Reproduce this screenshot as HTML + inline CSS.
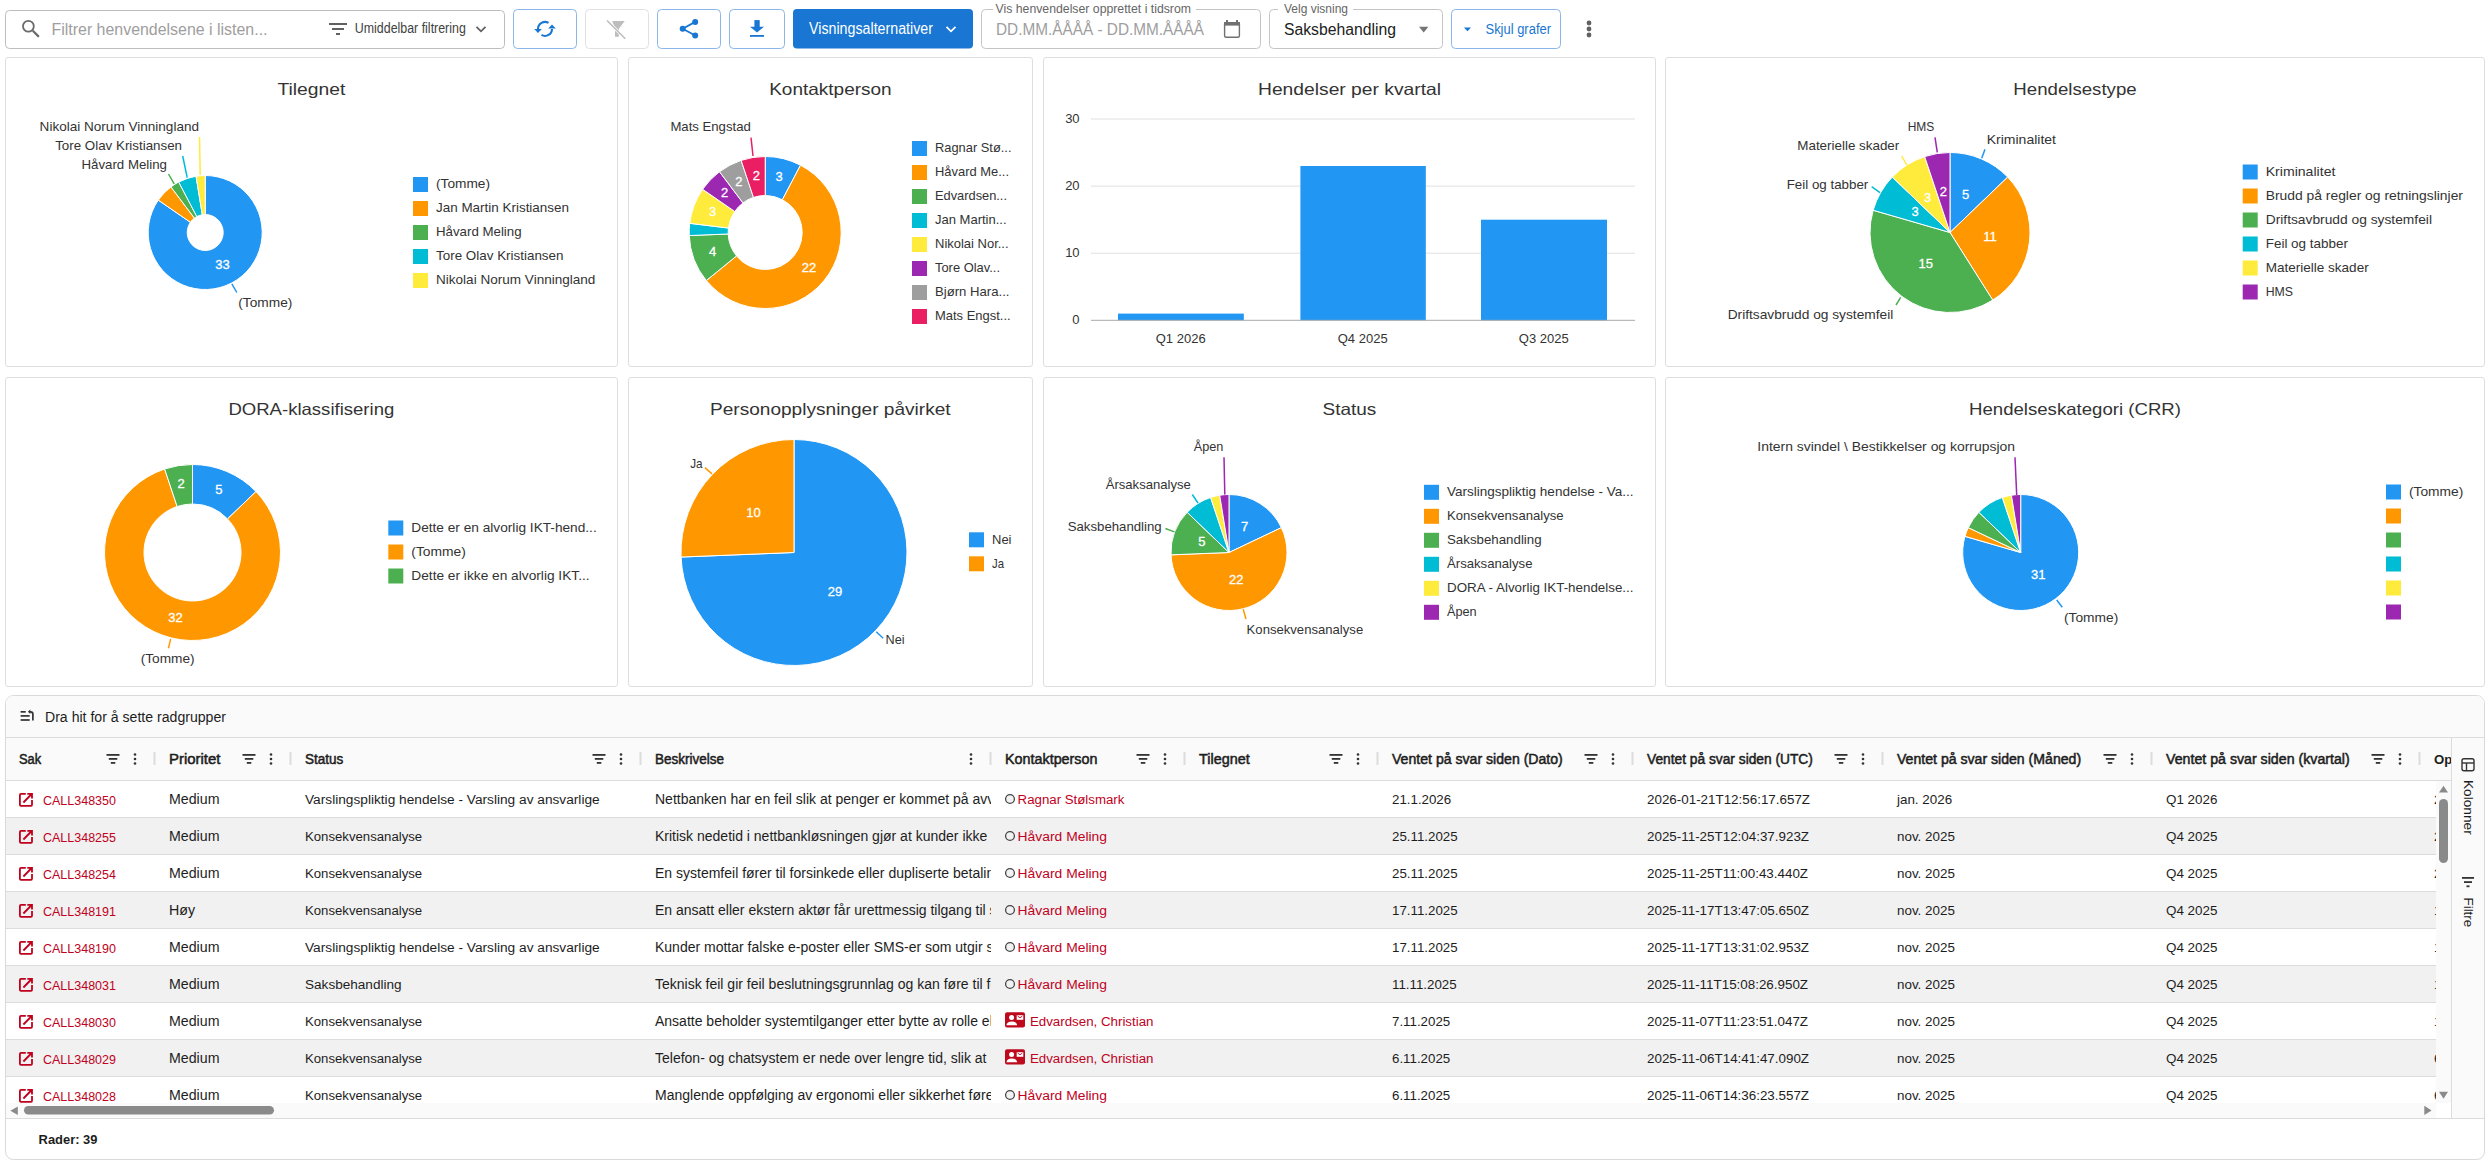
<!DOCTYPE html>
<html><head><meta charset="utf-8"><title>Henvendelser</title>
<style>
html,body{margin:0;padding:0;}
body{width:2490px;height:1166px;overflow:hidden;position:relative;background:#fff;font-family:"Liberation Sans",sans-serif;color:#1d1d1d;}
.pnl{position:absolute;border:1px solid #dedede;border-radius:3px;background:#fff;}
.ov{position:absolute;left:0;top:0;}
.a{position:absolute;white-space:nowrap;}
</style></head><body>
<div class="pnl" style="left:5px;top:57px;width:611px;height:308px"></div><div class="pnl" style="left:628px;top:57px;width:403px;height:308px"></div><div class="pnl" style="left:1043px;top:57px;width:611px;height:308px"></div><div class="pnl" style="left:1665px;top:57px;width:818px;height:308px"></div><div class="pnl" style="left:5px;top:377px;width:611px;height:308px"></div><div class="pnl" style="left:628px;top:377px;width:403px;height:308px"></div><div class="pnl" style="left:1043px;top:377px;width:611px;height:308px"></div><div class="pnl" style="left:1665px;top:377px;width:818px;height:308px"></div><svg class="ov" width="2490" height="1166" viewBox="0 0 2490 1166" font-family="Liberation Sans, sans-serif"><text x="277.4" y="95.3" font-size="16.5" fill="#333333" text-anchor="start" font-weight="normal" textLength="67.9" lengthAdjust="spacingAndGlyphs">Tilegnet</text><text x="769.2" y="95.3" font-size="16.5" fill="#333333" text-anchor="start" font-weight="normal" textLength="122.5" lengthAdjust="spacingAndGlyphs">Kontaktperson</text><text x="1258.0" y="95.3" font-size="16.5" fill="#333333" text-anchor="start" font-weight="normal" textLength="183.0" lengthAdjust="spacingAndGlyphs">Hendelser per kvartal</text><text x="2013.3" y="95.3" font-size="16.5" fill="#333333" text-anchor="start" font-weight="normal" textLength="123.4" lengthAdjust="spacingAndGlyphs">Hendelsestype</text><text x="228.4" y="415.3" font-size="16.5" fill="#333333" text-anchor="start" font-weight="normal" textLength="165.9" lengthAdjust="spacingAndGlyphs">DORA-klassifisering</text><text x="710.0" y="415.3" font-size="16.5" fill="#333333" text-anchor="start" font-weight="normal" textLength="240.6" lengthAdjust="spacingAndGlyphs">Personopplysninger påvirket</text><text x="1322.5" y="415.3" font-size="16.5" fill="#333333" text-anchor="start" font-weight="normal" textLength="53.8" lengthAdjust="spacingAndGlyphs">Status</text><text x="1969.0" y="415.3" font-size="16.5" fill="#333333" text-anchor="start" font-weight="normal" textLength="212.0" lengthAdjust="spacingAndGlyphs">Hendelseskategori (CRR)</text><path d="M205.20 175.50 A57.00 57.00 0 1 1 158.29 200.12 L190.39 222.27 A18.00 18.00 0 1 0 205.20 214.50 Z" fill="#2196f3" stroke="#fff" stroke-width="1" stroke-linejoin="round"/><path d="M158.29 200.12 A57.00 57.00 0 0 1 170.96 186.93 L194.39 218.11 A18.00 18.00 0 0 0 190.39 222.27 Z" fill="#ff9800" stroke="#fff" stroke-width="1" stroke-linejoin="round"/><path d="M170.96 186.93 A57.00 57.00 0 0 1 178.71 182.03 L196.83 216.56 A18.00 18.00 0 0 0 194.39 218.11 Z" fill="#4caf50" stroke="#fff" stroke-width="1" stroke-linejoin="round"/><path d="M178.71 182.03 A57.00 57.00 0 0 1 196.06 176.24 L202.31 214.73 A18.00 18.00 0 0 0 196.83 216.56 Z" fill="#00bcd4" stroke="#fff" stroke-width="1" stroke-linejoin="round"/><path d="M196.06 176.24 A57.00 57.00 0 0 1 205.20 175.50 L205.20 214.50 A18.00 18.00 0 0 0 202.31 214.73 Z" fill="#ffeb3b" stroke="#fff" stroke-width="1" stroke-linejoin="round"/><rect x="413.0" y="177.0" width="15" height="15" fill="#2196f3"/><text x="436.0" y="188.2" font-size="13.0" fill="#333333" text-anchor="start" font-weight="normal" textLength="54.0" lengthAdjust="spacingAndGlyphs">(Tomme)</text><rect x="413.0" y="201.0" width="15" height="15" fill="#ff9800"/><text x="436.0" y="212.2" font-size="13.0" fill="#333333" text-anchor="start" font-weight="normal" textLength="133.0" lengthAdjust="spacingAndGlyphs">Jan Martin Kristiansen</text><rect x="413.0" y="225.0" width="15" height="15" fill="#4caf50"/><text x="436.0" y="236.2" font-size="13.0" fill="#333333" text-anchor="start" font-weight="normal" textLength="85.6" lengthAdjust="spacingAndGlyphs">Håvard Meling</text><rect x="413.0" y="249.0" width="15" height="15" fill="#00bcd4"/><text x="436.0" y="260.2" font-size="13.0" fill="#333333" text-anchor="start" font-weight="normal" textLength="127.5" lengthAdjust="spacingAndGlyphs">Tore Olav Kristiansen</text><rect x="413.0" y="273.0" width="15" height="15" fill="#ffeb3b"/><text x="436.0" y="284.2" font-size="13.0" fill="#333333" text-anchor="start" font-weight="normal" textLength="159.4" lengthAdjust="spacingAndGlyphs">Nikolai Norum Vinningland</text><line x1="199.5" y1="137.0" x2="200.2" y2="175.0" stroke="#ffeb3b" stroke-width="1.5"/><line x1="182.7" y1="156.0" x2="187.2" y2="177.6" stroke="#00bcd4" stroke-width="1.5"/><line x1="168.5" y1="174.0" x2="174.2" y2="183.9" stroke="#4caf50" stroke-width="1.5"/><line x1="231.9" y1="283.9" x2="236.8" y2="292.5" stroke="#2196f3" stroke-width="1.5"/><text x="39.6" y="131.1" font-size="13.0" fill="#333333" text-anchor="start" font-weight="normal" textLength="159.4" lengthAdjust="spacingAndGlyphs">Nikolai Norum Vinningland</text><text x="55.2" y="150.4" font-size="13.0" fill="#333333" text-anchor="start" font-weight="normal" textLength="126.8" lengthAdjust="spacingAndGlyphs">Tore Olav Kristiansen</text><text x="81.5" y="169.3" font-size="13.0" fill="#333333" text-anchor="start" font-weight="normal" textLength="85.5" lengthAdjust="spacingAndGlyphs">Håvard Meling</text><text x="238.3" y="307.2" font-size="13.0" fill="#333333" text-anchor="start" font-weight="normal" textLength="54.1" lengthAdjust="spacingAndGlyphs">(Tomme)</text><text x="222.4" y="269.2" font-size="13.0" fill="#ffffff" text-anchor="middle" font-weight="normal" stroke="#ffffff" stroke-width="0.3">33</text><path d="M765.20 156.50 A76.00 76.00 0 0 1 800.52 165.21 L782.39 199.74 A37.00 37.00 0 0 0 765.20 195.50 Z" fill="#2196f3" stroke="#fff" stroke-width="1" stroke-linejoin="round"/><path d="M800.52 165.21 A76.00 76.00 0 1 1 706.33 280.57 L736.54 255.90 A37.00 37.00 0 1 0 782.39 199.74 Z" fill="#ff9800" stroke="#fff" stroke-width="1" stroke-linejoin="round"/><path d="M706.33 280.57 A76.00 76.00 0 0 1 689.26 235.56 L728.23 233.99 A37.00 37.00 0 0 0 736.54 255.90 Z" fill="#4caf50" stroke="#fff" stroke-width="1" stroke-linejoin="round"/><path d="M689.26 235.56 A76.00 76.00 0 0 1 689.75 223.34 L728.47 228.04 A37.00 37.00 0 0 0 728.23 233.99 Z" fill="#00bcd4" stroke="#fff" stroke-width="1" stroke-linejoin="round"/><path d="M689.75 223.34 A76.00 76.00 0 0 1 702.65 189.33 L734.75 211.48 A37.00 37.00 0 0 0 728.47 228.04 Z" fill="#ffeb3b" stroke="#fff" stroke-width="1" stroke-linejoin="round"/><path d="M702.65 189.33 A76.00 76.00 0 0 1 719.54 171.74 L742.97 202.92 A37.00 37.00 0 0 0 734.75 211.48 Z" fill="#9c27b0" stroke="#fff" stroke-width="1" stroke-linejoin="round"/><path d="M719.54 171.74 A76.00 76.00 0 0 1 741.13 160.41 L753.48 197.40 A37.00 37.00 0 0 0 742.97 202.92 Z" fill="#9e9e9e" stroke="#fff" stroke-width="1" stroke-linejoin="round"/><path d="M741.13 160.41 A76.00 76.00 0 0 1 765.20 156.50 L765.20 195.50 A37.00 37.00 0 0 0 753.48 197.40 Z" fill="#e91e63" stroke="#fff" stroke-width="1" stroke-linejoin="round"/><rect x="912.0" y="141.0" width="15" height="15" fill="#2196f3"/><text x="935.0" y="152.2" font-size="13.0" fill="#333333" text-anchor="start" font-weight="normal" textLength="76.5" lengthAdjust="spacingAndGlyphs">Ragnar Stø...</text><rect x="912.0" y="165.0" width="15" height="15" fill="#ff9800"/><text x="935.0" y="176.2" font-size="13.0" fill="#333333" text-anchor="start" font-weight="normal" textLength="74.0" lengthAdjust="spacingAndGlyphs">Håvard Me...</text><rect x="912.0" y="189.0" width="15" height="15" fill="#4caf50"/><text x="935.0" y="200.2" font-size="13.0" fill="#333333" text-anchor="start" font-weight="normal" textLength="72.0" lengthAdjust="spacingAndGlyphs">Edvardsen...</text><rect x="912.0" y="213.0" width="15" height="15" fill="#00bcd4"/><text x="935.0" y="224.2" font-size="13.0" fill="#333333" text-anchor="start" font-weight="normal" textLength="71.6" lengthAdjust="spacingAndGlyphs">Jan Martin...</text><rect x="912.0" y="237.0" width="15" height="15" fill="#ffeb3b"/><text x="935.0" y="248.2" font-size="13.0" fill="#333333" text-anchor="start" font-weight="normal" textLength="73.6" lengthAdjust="spacingAndGlyphs">Nikolai Nor...</text><rect x="912.0" y="261.0" width="15" height="15" fill="#9c27b0"/><text x="935.0" y="272.2" font-size="13.0" fill="#333333" text-anchor="start" font-weight="normal" textLength="65.0" lengthAdjust="spacingAndGlyphs">Tore Olav...</text><rect x="912.0" y="285.0" width="15" height="15" fill="#9e9e9e"/><text x="935.0" y="296.2" font-size="13.0" fill="#333333" text-anchor="start" font-weight="normal" textLength="74.5" lengthAdjust="spacingAndGlyphs">Bjørn Hara...</text><rect x="912.0" y="309.0" width="15" height="15" fill="#e91e63"/><text x="935.0" y="320.2" font-size="13.0" fill="#333333" text-anchor="start" font-weight="normal" textLength="75.6" lengthAdjust="spacingAndGlyphs">Mats Engst...</text><line x1="751.0" y1="137.7" x2="753.0" y2="156.0" stroke="#e91e63" stroke-width="1.5"/><text x="670.4" y="131.1" font-size="13.0" fill="#333333" text-anchor="start" font-weight="normal" textLength="80.4" lengthAdjust="spacingAndGlyphs">Mats Engstad</text><text x="779.0" y="181.2" font-size="13.0" fill="#ffffff" text-anchor="middle" font-weight="normal" stroke="#ffffff" stroke-width="0.3">3</text><text x="809.0" y="272.1" font-size="13.0" fill="#ffffff" text-anchor="middle" font-weight="normal" stroke="#ffffff" stroke-width="0.3">22</text><text x="712.5" y="256.2" font-size="13.0" fill="#ffffff" text-anchor="middle" font-weight="normal" stroke="#ffffff" stroke-width="0.3">4</text><text x="712.5" y="216.0" font-size="13.0" fill="#ffffff" text-anchor="middle" font-weight="normal" stroke="#ffffff" stroke-width="0.3">3</text><text x="724.7" y="197.1" font-size="13.0" fill="#ffffff" text-anchor="middle" font-weight="normal" stroke="#ffffff" stroke-width="0.3">2</text><text x="738.9" y="185.7" font-size="13.0" fill="#ffffff" text-anchor="middle" font-weight="normal" stroke="#ffffff" stroke-width="0.3">2</text><text x="756.4" y="180.1" font-size="13.0" fill="#ffffff" text-anchor="middle" font-weight="normal" stroke="#ffffff" stroke-width="0.3">2</text><rect x="1091" y="118.5" width="544" height="1" fill="#e0e0e0"/><text x="1079.6" y="122.6" font-size="13.0" fill="#333333" text-anchor="end" font-weight="normal">30</text><rect x="1091" y="185.6" width="544" height="1" fill="#e0e0e0"/><text x="1079.6" y="189.7" font-size="13.0" fill="#333333" text-anchor="end" font-weight="normal">20</text><rect x="1091" y="252.7" width="544" height="1" fill="#e0e0e0"/><text x="1079.6" y="256.8" font-size="13.0" fill="#333333" text-anchor="end" font-weight="normal">10</text><text x="1079.6" y="323.9" font-size="13.0" fill="#333333" text-anchor="end" font-weight="normal">0</text><rect x="1118.0" y="313.6" width="125.8" height="6.7" fill="#2196f3"/><rect x="1300.4" y="166.0" width="125.4" height="154.3" fill="#2196f3"/><rect x="1481.0" y="219.7" width="126.0" height="100.7" fill="#2196f3"/><rect x="1091" y="319.8" width="544" height="1" fill="#aaaaaa"/><text x="1180.7" y="343.0" font-size="13.0" fill="#333333" text-anchor="middle" font-weight="normal">Q1 2026</text><text x="1362.7" y="343.0" font-size="13.0" fill="#333333" text-anchor="middle" font-weight="normal">Q4 2025</text><text x="1543.8" y="343.0" font-size="13.0" fill="#333333" text-anchor="middle" font-weight="normal">Q3 2025</text><path d="M1950.00 232.50 L1950.00 152.50 A80.00 80.00 0 0 1 2007.70 177.08 Z" fill="#2196f3" stroke="#fff" stroke-width="1" stroke-linejoin="round"/><path d="M1950.00 232.50 L2007.70 177.08 A80.00 80.00 0 0 1 1992.76 300.12 Z" fill="#ff9800" stroke="#fff" stroke-width="1" stroke-linejoin="round"/><path d="M1950.00 232.50 L1992.76 300.12 A80.00 80.00 0 0 1 1873.16 210.24 Z" fill="#4caf50" stroke="#fff" stroke-width="1" stroke-linejoin="round"/><path d="M1950.00 232.50 L1873.16 210.24 A80.00 80.00 0 0 1 1892.30 177.08 Z" fill="#00bcd4" stroke="#fff" stroke-width="1" stroke-linejoin="round"/><path d="M1950.00 232.50 L1892.30 177.08 A80.00 80.00 0 0 1 1924.67 156.62 Z" fill="#ffeb3b" stroke="#fff" stroke-width="1" stroke-linejoin="round"/><path d="M1950.00 232.50 L1924.67 156.62 A80.00 80.00 0 0 1 1950.00 152.50 Z" fill="#9c27b0" stroke="#fff" stroke-width="1" stroke-linejoin="round"/><rect x="2242.7" y="164.5" width="15" height="15" fill="#2196f3"/><text x="2265.7" y="175.7" font-size="13.0" fill="#333333" text-anchor="start" font-weight="normal" textLength="69.7" lengthAdjust="spacingAndGlyphs">Kriminalitet</text><rect x="2242.7" y="188.5" width="15" height="15" fill="#ff9800"/><text x="2265.7" y="199.7" font-size="13.0" fill="#333333" text-anchor="start" font-weight="normal" textLength="197.3" lengthAdjust="spacingAndGlyphs">Brudd på regler og retningslinjer</text><rect x="2242.7" y="212.5" width="15" height="15" fill="#4caf50"/><text x="2265.7" y="223.7" font-size="13.0" fill="#333333" text-anchor="start" font-weight="normal" textLength="166.3" lengthAdjust="spacingAndGlyphs">Driftsavbrudd og systemfeil</text><rect x="2242.7" y="236.5" width="15" height="15" fill="#00bcd4"/><text x="2265.7" y="247.7" font-size="13.0" fill="#333333" text-anchor="start" font-weight="normal" textLength="82.3" lengthAdjust="spacingAndGlyphs">Feil og tabber</text><rect x="2242.7" y="260.5" width="15" height="15" fill="#ffeb3b"/><text x="2265.7" y="271.7" font-size="13.0" fill="#333333" text-anchor="start" font-weight="normal" textLength="103.0" lengthAdjust="spacingAndGlyphs">Materielle skader</text><rect x="2242.7" y="284.5" width="15" height="15" fill="#9c27b0"/><text x="2265.7" y="295.7" font-size="13.0" fill="#333333" text-anchor="start" font-weight="normal" textLength="27.3" lengthAdjust="spacingAndGlyphs">HMS</text><line x1="1935.0" y1="137.3" x2="1937.3" y2="152.3" stroke="#9c27b0" stroke-width="1.5"/><line x1="1985.0" y1="149.3" x2="1981.7" y2="158.3" stroke="#2196f3" stroke-width="1.5"/><line x1="1901.7" y1="156.0" x2="1906.7" y2="165.0" stroke="#ffeb3b" stroke-width="1.5"/><line x1="1871.7" y1="186.7" x2="1880.0" y2="192.7" stroke="#00bcd4" stroke-width="1.5"/><line x1="1900.7" y1="297.3" x2="1896.0" y2="305.0" stroke="#4caf50" stroke-width="1.5"/><text x="1907.7" y="131.4" font-size="13.0" fill="#333333" text-anchor="start" font-weight="normal" textLength="26.6" lengthAdjust="spacingAndGlyphs">HMS</text><text x="1986.7" y="144.0" font-size="13.0" fill="#333333" text-anchor="start" font-weight="normal" textLength="69.3" lengthAdjust="spacingAndGlyphs">Kriminalitet</text><text x="1797.3" y="150.4" font-size="13.0" fill="#333333" text-anchor="start" font-weight="normal" textLength="102.0" lengthAdjust="spacingAndGlyphs">Materielle skader</text><text x="1786.7" y="189.0" font-size="13.0" fill="#333333" text-anchor="start" font-weight="normal" textLength="81.6" lengthAdjust="spacingAndGlyphs">Feil og tabber</text><text x="1727.7" y="319.0" font-size="13.0" fill="#333333" text-anchor="start" font-weight="normal" textLength="165.6" lengthAdjust="spacingAndGlyphs">Driftsavbrudd og systemfeil</text><text x="1965.7" y="199.0" font-size="13.0" fill="#ffffff" text-anchor="middle" font-weight="normal" stroke="#ffffff" stroke-width="0.3">5</text><text x="1990.0" y="241.4" font-size="13.0" fill="#ffffff" text-anchor="middle" font-weight="normal" stroke="#ffffff" stroke-width="0.3">11</text><text x="1925.7" y="268.0" font-size="13.0" fill="#ffffff" text-anchor="middle" font-weight="normal" stroke="#ffffff" stroke-width="0.3">15</text><text x="1915.0" y="216.4" font-size="13.0" fill="#ffffff" text-anchor="middle" font-weight="normal" stroke="#ffffff" stroke-width="0.3">3</text><text x="1927.7" y="202.0" font-size="13.0" fill="#ffffff" text-anchor="middle" font-weight="normal" stroke="#ffffff" stroke-width="0.3">3</text><text x="1943.3" y="196.4" font-size="13.0" fill="#ffffff" text-anchor="middle" font-weight="normal" stroke="#ffffff" stroke-width="0.3">2</text><path d="M192.50 464.50 A88.00 88.00 0 0 1 255.97 491.54 L227.48 518.90 A48.50 48.50 0 0 0 192.50 504.00 Z" fill="#2196f3" stroke="#fff" stroke-width="1" stroke-linejoin="round"/><path d="M255.97 491.54 A88.00 88.00 0 1 1 164.63 469.03 L177.14 506.50 A48.50 48.50 0 1 0 227.48 518.90 Z" fill="#ff9800" stroke="#fff" stroke-width="1" stroke-linejoin="round"/><path d="M164.63 469.03 A88.00 88.00 0 0 1 192.50 464.50 L192.50 504.00 A48.50 48.50 0 0 0 177.14 506.50 Z" fill="#4caf50" stroke="#fff" stroke-width="1" stroke-linejoin="round"/><rect x="388.3" y="520.5" width="15" height="15" fill="#2196f3"/><text x="411.3" y="531.7" font-size="13.0" fill="#333333" text-anchor="start" font-weight="normal" textLength="185.4" lengthAdjust="spacingAndGlyphs">Dette er en alvorlig IKT-hend...</text><rect x="388.3" y="544.5" width="15" height="15" fill="#ff9800"/><text x="411.3" y="555.7" font-size="13.0" fill="#333333" text-anchor="start" font-weight="normal" textLength="54.6" lengthAdjust="spacingAndGlyphs">(Tomme)</text><rect x="388.3" y="568.5" width="15" height="15" fill="#4caf50"/><text x="411.3" y="579.7" font-size="13.0" fill="#333333" text-anchor="start" font-weight="normal" textLength="178.3" lengthAdjust="spacingAndGlyphs">Dette er ikke en alvorlig IKT...</text><line x1="170.7" y1="638.9" x2="168.4" y2="648.2" stroke="#ff9800" stroke-width="1.5"/><text x="140.7" y="663.4" font-size="13.0" fill="#333333" text-anchor="start" font-weight="normal" textLength="54.0" lengthAdjust="spacingAndGlyphs">(Tomme)</text><text x="218.8" y="493.6" font-size="13.0" fill="#ffffff" text-anchor="middle" font-weight="normal" stroke="#ffffff" stroke-width="0.3">5</text><text x="181.1" y="487.9" font-size="13.0" fill="#ffffff" text-anchor="middle" font-weight="normal" stroke="#ffffff" stroke-width="0.3">2</text><text x="175.5" y="622.4" font-size="13.0" fill="#ffffff" text-anchor="middle" font-weight="normal" stroke="#ffffff" stroke-width="0.3">32</text><path d="M794.00 552.50 L794.00 439.50 A113.00 113.00 0 1 1 681.09 557.05 Z" fill="#2196f3" stroke="#fff" stroke-width="1" stroke-linejoin="round"/><path d="M794.00 552.50 L681.09 557.05 A113.00 113.00 0 0 1 794.00 439.50 Z" fill="#ff9800" stroke="#fff" stroke-width="1" stroke-linejoin="round"/><rect x="969.0" y="532.3" width="15" height="15" fill="#2196f3"/><text x="992.0" y="543.5" font-size="13.0" fill="#333333" text-anchor="start" font-weight="normal" textLength="19.5" lengthAdjust="spacingAndGlyphs">Nei</text><rect x="969.0" y="556.3" width="15" height="15" fill="#ff9800"/><text x="992.0" y="567.5" font-size="13.0" fill="#333333" text-anchor="start" font-weight="normal" textLength="12.0" lengthAdjust="spacingAndGlyphs">Ja</text><line x1="704.9" y1="467.6" x2="712.0" y2="473.9" stroke="#ff9800" stroke-width="1.5"/><line x1="876.2" y1="631.8" x2="883.2" y2="638.3" stroke="#2196f3" stroke-width="1.5"/><text x="690.2" y="468.1" font-size="13.0" fill="#333333" text-anchor="start" font-weight="normal" textLength="12.4" lengthAdjust="spacingAndGlyphs">Ja</text><text x="885.5" y="644.4" font-size="13.0" fill="#333333" text-anchor="start" font-weight="normal" textLength="19.0" lengthAdjust="spacingAndGlyphs">Nei</text><text x="753.6" y="517.1" font-size="13.0" fill="#ffffff" text-anchor="middle" font-weight="normal" stroke="#ffffff" stroke-width="0.3">10</text><text x="835.1" y="595.5" font-size="13.0" fill="#ffffff" text-anchor="middle" font-weight="normal" stroke="#ffffff" stroke-width="0.3">29</text><path d="M1229.00 552.50 L1229.00 494.50 A58.00 58.00 0 0 1 1281.40 527.64 Z" fill="#2196f3" stroke="#fff" stroke-width="1" stroke-linejoin="round"/><path d="M1229.00 552.50 L1281.40 527.64 A58.00 58.00 0 1 1 1171.05 554.84 Z" fill="#ff9800" stroke="#fff" stroke-width="1" stroke-linejoin="round"/><path d="M1229.00 552.50 L1171.05 554.84 A58.00 58.00 0 0 1 1187.17 512.32 Z" fill="#4caf50" stroke="#fff" stroke-width="1" stroke-linejoin="round"/><path d="M1229.00 552.50 L1187.17 512.32 A58.00 58.00 0 0 1 1210.63 497.48 Z" fill="#00bcd4" stroke="#fff" stroke-width="1" stroke-linejoin="round"/><path d="M1229.00 552.50 L1210.63 497.48 A58.00 58.00 0 0 1 1219.70 495.25 Z" fill="#ffeb3b" stroke="#fff" stroke-width="1" stroke-linejoin="round"/><path d="M1229.00 552.50 L1219.70 495.25 A58.00 58.00 0 0 1 1229.00 494.50 Z" fill="#9c27b0" stroke="#fff" stroke-width="1" stroke-linejoin="round"/><rect x="1424.0" y="484.8" width="15" height="15" fill="#2196f3"/><text x="1447.0" y="496.0" font-size="13.0" fill="#333333" text-anchor="start" font-weight="normal" textLength="186.5" lengthAdjust="spacingAndGlyphs">Varslingspliktig hendelse - Va...</text><rect x="1424.0" y="508.8" width="15" height="15" fill="#ff9800"/><text x="1447.0" y="520.0" font-size="13.0" fill="#333333" text-anchor="start" font-weight="normal" textLength="116.6" lengthAdjust="spacingAndGlyphs">Konsekvensanalyse</text><rect x="1424.0" y="532.8" width="15" height="15" fill="#4caf50"/><text x="1447.0" y="544.0" font-size="13.0" fill="#333333" text-anchor="start" font-weight="normal" textLength="94.6" lengthAdjust="spacingAndGlyphs">Saksbehandling</text><rect x="1424.0" y="556.8" width="15" height="15" fill="#00bcd4"/><text x="1447.0" y="568.0" font-size="13.0" fill="#333333" text-anchor="start" font-weight="normal" textLength="85.5" lengthAdjust="spacingAndGlyphs">Årsaksanalyse</text><rect x="1424.0" y="580.8" width="15" height="15" fill="#ffeb3b"/><text x="1447.0" y="592.0" font-size="13.0" fill="#333333" text-anchor="start" font-weight="normal" textLength="186.5" lengthAdjust="spacingAndGlyphs">DORA - Alvorlig IKT-hendelse...</text><rect x="1424.0" y="604.8" width="15" height="15" fill="#9c27b0"/><text x="1447.0" y="616.0" font-size="13.0" fill="#333333" text-anchor="start" font-weight="normal" textLength="29.7" lengthAdjust="spacingAndGlyphs">Åpen</text><line x1="1224.0" y1="457.2" x2="1224.8" y2="494.5" stroke="#9c27b0" stroke-width="1.5"/><line x1="1192.3" y1="494.5" x2="1198.0" y2="503.0" stroke="#00bcd4" stroke-width="1.5"/><line x1="1165.4" y1="528.5" x2="1174.4" y2="531.9" stroke="#4caf50" stroke-width="1.5"/><line x1="1243.2" y1="609.2" x2="1246.0" y2="619.0" stroke="#ff9800" stroke-width="1.5"/><text x="1193.7" y="451.1" font-size="13.0" fill="#333333" text-anchor="start" font-weight="normal" textLength="29.7" lengthAdjust="spacingAndGlyphs">Åpen</text><text x="1105.7" y="489.3" font-size="13.0" fill="#333333" text-anchor="start" font-weight="normal" textLength="85.2" lengthAdjust="spacingAndGlyphs">Årsaksanalyse</text><text x="1067.7" y="531.2" font-size="13.0" fill="#333333" text-anchor="start" font-weight="normal" textLength="94.0" lengthAdjust="spacingAndGlyphs">Saksbehandling</text><text x="1246.6" y="634.3" font-size="13.0" fill="#333333" text-anchor="start" font-weight="normal" textLength="116.6" lengthAdjust="spacingAndGlyphs">Konsekvensanalyse</text><text x="1244.6" y="531.2" font-size="13.0" fill="#ffffff" text-anchor="middle" font-weight="normal" stroke="#ffffff" stroke-width="0.3">7</text><text x="1201.9" y="545.9" font-size="13.0" fill="#ffffff" text-anchor="middle" font-weight="normal" stroke="#ffffff" stroke-width="0.3">5</text><text x="1236.2" y="584.2" font-size="13.0" fill="#ffffff" text-anchor="middle" font-weight="normal" stroke="#ffffff" stroke-width="0.3">22</text><path d="M2020.70 552.50 L2020.70 494.50 A58.00 58.00 0 1 1 1964.99 536.36 Z" fill="#2196f3" stroke="#fff" stroke-width="1" stroke-linejoin="round"/><path d="M2020.70 552.50 L1964.99 536.36 A58.00 58.00 0 0 1 1968.30 527.64 Z" fill="#ff9800" stroke="#fff" stroke-width="1" stroke-linejoin="round"/><path d="M2020.70 552.50 L1968.30 527.64 A58.00 58.00 0 0 1 1978.87 512.32 Z" fill="#4caf50" stroke="#fff" stroke-width="1" stroke-linejoin="round"/><path d="M2020.70 552.50 L1978.87 512.32 A58.00 58.00 0 0 1 2002.33 497.48 Z" fill="#00bcd4" stroke="#fff" stroke-width="1" stroke-linejoin="round"/><path d="M2020.70 552.50 L2002.33 497.48 A58.00 58.00 0 0 1 2011.40 495.25 Z" fill="#ffeb3b" stroke="#fff" stroke-width="1" stroke-linejoin="round"/><path d="M2020.70 552.50 L2011.40 495.25 A58.00 58.00 0 0 1 2020.70 494.50 Z" fill="#9c27b0" stroke="#fff" stroke-width="1" stroke-linejoin="round"/><rect x="2386.0" y="484.5" width="15" height="15" fill="#2196f3"/><text x="2409.0" y="495.7" font-size="13.0" fill="#333333" text-anchor="start" font-weight="normal" textLength="54.3" lengthAdjust="spacingAndGlyphs">(Tomme)</text><rect x="2386.0" y="508.5" width="15" height="15" fill="#ff9800"/><rect x="2386.0" y="532.5" width="15" height="15" fill="#4caf50"/><rect x="2386.0" y="556.5" width="15" height="15" fill="#00bcd4"/><rect x="2386.0" y="580.5" width="15" height="15" fill="#ffeb3b"/><rect x="2386.0" y="604.5" width="15" height="15" fill="#9c27b0"/><line x1="2015.0" y1="457.3" x2="2016.7" y2="495.0" stroke="#9c27b0" stroke-width="1.5"/><line x1="2056.7" y1="600.0" x2="2062.3" y2="607.3" stroke="#2196f3" stroke-width="1.5"/><text x="1757.3" y="451.4" font-size="13.0" fill="#333333" text-anchor="start" font-weight="normal" textLength="257.7" lengthAdjust="spacingAndGlyphs">Intern svindel \ Bestikkelser og korrupsjon</text><text x="2064.0" y="622.0" font-size="13.0" fill="#333333" text-anchor="start" font-weight="normal" textLength="54.3" lengthAdjust="spacingAndGlyphs">(Tomme)</text><text x="2038.3" y="579.0" font-size="13.0" fill="#ffffff" text-anchor="middle" font-weight="normal" stroke="#ffffff" stroke-width="0.3">31</text></svg><svg class="ov" width="2490" height="60" viewBox="0 0 2490 60" font-family="Liberation Sans, sans-serif">
<!-- search box -->
<rect x="5.5" y="10.5" width="499" height="38" rx="4" fill="#fff" stroke="#bdbdbd" stroke-width="1"/>
<circle cx="28.4" cy="26.3" r="5.4" fill="none" stroke="#6b6b6b" stroke-width="1.8"/>
<line x1="33.3" y1="31.3" x2="38.2" y2="36.1" stroke="#6b6b6b" stroke-width="2.3" stroke-linecap="round"/>
<text x="51.5" y="35" font-size="16" fill="#9e9e9e" textLength="216" lengthAdjust="spacingAndGlyphs">Filtrer henvendelsene i listen...</text>
<rect x="329" y="23" width="18" height="2" fill="#616161"/><rect x="332" y="28" width="12" height="2" fill="#616161"/><rect x="336" y="33" width="4" height="2" fill="#616161"/>
<text x="354.8" y="33" font-size="14" fill="#424242" textLength="111" lengthAdjust="spacingAndGlyphs">Umiddelbar filtrering</text>
<path d="M476.5 26.8 L481 31.3 L485.5 26.8" fill="none" stroke="#616161" stroke-width="1.8"/>
<!-- refresh -->
<rect x="513.5" y="9.5" width="63" height="39" rx="4" fill="#fff" stroke="#8ab6ea" stroke-width="1"/>
<path d="M548.5 22.84 A7 7 0 0 0 538 28.9" fill="none" stroke="#1976d2" stroke-width="2.1"/>
<path d="M534.2 29 L541.8 29 L538 33 Z" fill="#1976d2"/>
<path d="M541.5 34.96 A7 7 0 0 0 552 28.9" fill="none" stroke="#1976d2" stroke-width="2.1"/>
<path d="M548.2 28.6 L555.8 28.6 L552 24.6 Z" fill="#1976d2"/>
<!-- filter off (disabled) -->
<rect x="585.5" y="9.5" width="63" height="39" rx="4" fill="#fff" stroke="#e0e0e0" stroke-width="1"/>
<path d="M612.2 21 L624.7 21 L619 28.4 L618.8 36.7 L615 36.7 L615 28.4 Z" fill="#bdbdbd"/>
<line x1="607" y1="20.5" x2="625.3" y2="38.8" stroke="#fff" stroke-width="3"/>
<line x1="607" y1="20.5" x2="625.3" y2="38.8" stroke="#bdbdbd" stroke-width="1.6"/>
<!-- share -->
<rect x="657.5" y="9.5" width="63" height="39" rx="4" fill="#fff" stroke="#8ab6ea" stroke-width="1"/>
<line x1="695.2" y1="21.9" x2="682.7" y2="28.8" stroke="#1976d2" stroke-width="1.8"/>
<line x1="695.2" y1="35.5" x2="682.7" y2="28.8" stroke="#1976d2" stroke-width="1.8"/>
<circle cx="695.2" cy="21.9" r="3" fill="#1976d2"/><circle cx="682.7" cy="28.8" r="3" fill="#1976d2"/><circle cx="695.2" cy="35.5" r="3" fill="#1976d2"/>
<!-- download -->
<rect x="729.5" y="9.5" width="55" height="39" rx="4" fill="#fff" stroke="#8ab6ea" stroke-width="1"/>
<rect x="754.4" y="20.1" width="5.3" height="7" fill="#1976d2"/>
<path d="M750 26.7 L764 26.7 L757 32.4 Z" fill="#1976d2"/>
<rect x="750" y="35" width="14" height="1.8" fill="#1976d2"/>
<!-- visningsalternativer -->
<rect x="793" y="9" width="180" height="39.5" rx="4" fill="#1976d2"/>
<text x="809" y="34" font-size="16" fill="#fff" textLength="124" lengthAdjust="spacingAndGlyphs">Visningsalternativer</text>
<path d="M946.5 26.8 L951 31.3 L955.5 26.8" fill="none" stroke="#fff" stroke-width="1.8"/>
<!-- date field -->
<rect x="981.5" y="9.5" width="279" height="39" rx="4" fill="#fff" stroke="#c4c4c4" stroke-width="1"/>
<rect x="993" y="5" width="203" height="8" fill="#fff"/>
<text x="995.5" y="13.2" font-size="13" fill="#666" textLength="195.5" lengthAdjust="spacingAndGlyphs">Vis henvendelser opprettet i tidsrom</text>
<text x="996" y="35" font-size="16" fill="#9e9e9e" textLength="208" lengthAdjust="spacingAndGlyphs">DD.MM.ÅÅÅÅ - DD.MM.ÅÅÅÅ</text>
<rect x="1224.6" y="22.6" width="14.8" height="14.6" rx="1.5" fill="none" stroke="#707070" stroke-width="1.4"/>
<rect x="1224" y="22" width="16" height="3.6" fill="#707070"/>
<rect x="1226" y="20" width="2" height="3" fill="#707070"/><rect x="1236" y="20" width="2" height="3" fill="#707070"/>
<!-- velg visning -->
<rect x="1269.5" y="9.5" width="173" height="39" rx="4" fill="#fff" stroke="#c4c4c4" stroke-width="1"/>
<rect x="1278" y="5" width="75" height="8" fill="#fff"/>
<text x="1284" y="13.3" font-size="13" fill="#666" textLength="64" lengthAdjust="spacingAndGlyphs">Velg visning</text>
<text x="1284" y="35" font-size="16" fill="#212121" textLength="112" lengthAdjust="spacingAndGlyphs">Saksbehandling</text>
<path d="M1419 26.7 L1428.4 26.7 L1423.7 32.5 Z" fill="#757575"/>
<!-- skjul grafer -->
<rect x="1451.5" y="9.5" width="109" height="39" rx="4" fill="#fff" stroke="#8ab6ea" stroke-width="1"/>
<path d="M1464 27.5 L1471 27.5 L1467.5 31.2 Z" fill="#1976d2"/>
<text x="1485.5" y="33.5" font-size="14" fill="#1976d2" textLength="65.5" lengthAdjust="spacingAndGlyphs">Skjul grafer</text>
<!-- kebab -->
<circle cx="1589" cy="23" r="2.4" fill="#616161"/><circle cx="1589" cy="29" r="2.4" fill="#616161"/><circle cx="1589" cy="35" r="2.4" fill="#616161"/>
</svg>
<svg class="ov" width="2490" height="1166" viewBox="0 0 2490 1166" font-family="Liberation Sans, sans-serif"><defs><clipPath id="tclip"><rect x="6" y="696" width="2478" height="463" rx="7"/></clipPath><clipPath id="bclip"><rect x="6" y="781" width="2430" height="322"/></clipPath><clipPath id="hclip"><rect x="6" y="738" width="2445" height="42"/></clipPath><clipPath id="dclip"><rect x="640" y="781" width="351" height="322"/></clipPath></defs><rect x="5.5" y="695.5" width="2479" height="464" rx="8" fill="#fff" stroke="#d9d9d9"/><g clip-path="url(#tclip)"><rect x="6" y="696" width="2478" height="84" fill="#fafafa"/><rect x="6" y="737" width="2478" height="1" fill="#dcdcdc"/><rect x="6" y="780" width="2445" height="1" fill="#dcdcdc"/><rect x="6" y="817" width="2430" height="1" fill="#dcdcdc"/><rect x="6" y="818" width="2430" height="36" fill="#f1f1f1"/><rect x="6" y="854" width="2430" height="1" fill="#dcdcdc"/><rect x="6" y="891" width="2430" height="1" fill="#dcdcdc"/><rect x="6" y="892" width="2430" height="36" fill="#f1f1f1"/><rect x="6" y="928" width="2430" height="1" fill="#dcdcdc"/><rect x="6" y="965" width="2430" height="1" fill="#dcdcdc"/><rect x="6" y="966" width="2430" height="36" fill="#f1f1f1"/><rect x="6" y="1002" width="2430" height="1" fill="#dcdcdc"/><rect x="6" y="1039" width="2430" height="1" fill="#dcdcdc"/><rect x="6" y="1040" width="2430" height="36" fill="#f1f1f1"/><rect x="6" y="1076" width="2430" height="1" fill="#dcdcdc"/><rect x="6" y="1113" width="2430" height="1" fill="#dcdcdc"/><rect x="6" y="1103" width="2445" height="15" fill="#fafafa"/><rect x="6" y="1118" width="2478" height="1" fill="#dcdcdc"/><rect x="2452" y="738" width="32" height="380" fill="#fafafa"/><rect x="2451" y="738" width="1" height="380" fill="#dcdcdc"/><rect x="2436" y="781" width="15" height="337" fill="#fafafa"/></g><rect x="20.6" y="711" width="5.1" height="1.7" fill="#333"/><rect x="20.6" y="715.05" width="9.1" height="1.7" fill="#333"/><rect x="20.6" y="719.15" width="9.1" height="1.7" fill="#333"/><path d="M32.9 720.6 V714.2 Q32.9 711.85 30.6 711.85 H29.6" fill="none" stroke="#333" stroke-width="1.7"/><path d="M27.9 711.85 L30.3 709.6 L30.3 714.1 Z" fill="#333"/><text x="45" y="721.8" font-size="14" fill="#1d1d1d" textLength="181" lengthAdjust="spacingAndGlyphs">Dra hit for å sette radgrupper</text><g clip-path="url(#hclip)"><text x="19.0" y="764" font-size="14" fill="#1d1d1d" stroke="#1d1d1d" stroke-width="0.5" textLength="22.2" lengthAdjust="spacingAndGlyphs">Sak</text><rect x="106.5" y="754" width="13" height="1.8" fill="#333"/><rect x="108.8" y="758" width="8.5" height="1.8" fill="#333"/><rect x="110.8" y="762" width="4.5" height="1.8" fill="#333"/><circle cx="135.0" cy="754.5" r="1.3" fill="#333"/><circle cx="135.0" cy="759" r="1.3" fill="#333"/><circle cx="135.0" cy="763.5" r="1.3" fill="#333"/><rect x="153.5" y="752" width="2" height="13" fill="#dcdcdc"/><text x="169.0" y="764" font-size="14" fill="#1d1d1d" stroke="#1d1d1d" stroke-width="0.5" textLength="51.4" lengthAdjust="spacingAndGlyphs">Prioritet</text><rect x="242.5" y="754" width="13" height="1.8" fill="#333"/><rect x="244.8" y="758" width="8.5" height="1.8" fill="#333"/><rect x="246.8" y="762" width="4.5" height="1.8" fill="#333"/><circle cx="271.0" cy="754.5" r="1.3" fill="#333"/><circle cx="271.0" cy="759" r="1.3" fill="#333"/><circle cx="271.0" cy="763.5" r="1.3" fill="#333"/><rect x="289.5" y="752" width="2" height="13" fill="#dcdcdc"/><text x="305.0" y="764" font-size="14" fill="#1d1d1d" stroke="#1d1d1d" stroke-width="0.5" textLength="38.3" lengthAdjust="spacingAndGlyphs">Status</text><rect x="592.5" y="754" width="13" height="1.8" fill="#333"/><rect x="594.8" y="758" width="8.5" height="1.8" fill="#333"/><rect x="596.8" y="762" width="4.5" height="1.8" fill="#333"/><circle cx="621.0" cy="754.5" r="1.3" fill="#333"/><circle cx="621.0" cy="759" r="1.3" fill="#333"/><circle cx="621.0" cy="763.5" r="1.3" fill="#333"/><rect x="639.5" y="752" width="2" height="13" fill="#dcdcdc"/><text x="655.0" y="764" font-size="14" fill="#1d1d1d" stroke="#1d1d1d" stroke-width="0.5" textLength="69.0" lengthAdjust="spacingAndGlyphs">Beskrivelse</text><circle cx="971.0" cy="754.5" r="1.3" fill="#333"/><circle cx="971.0" cy="759" r="1.3" fill="#333"/><circle cx="971.0" cy="763.5" r="1.3" fill="#333"/><rect x="989.5" y="752" width="2" height="13" fill="#dcdcdc"/><text x="1005.0" y="764" font-size="14" fill="#1d1d1d" stroke="#1d1d1d" stroke-width="0.5" textLength="92.5" lengthAdjust="spacingAndGlyphs">Kontaktperson</text><rect x="1136.5" y="754" width="13" height="1.8" fill="#333"/><rect x="1138.8" y="758" width="8.5" height="1.8" fill="#333"/><rect x="1140.8" y="762" width="4.5" height="1.8" fill="#333"/><circle cx="1165.0" cy="754.5" r="1.3" fill="#333"/><circle cx="1165.0" cy="759" r="1.3" fill="#333"/><circle cx="1165.0" cy="763.5" r="1.3" fill="#333"/><rect x="1183.5" y="752" width="2" height="13" fill="#dcdcdc"/><text x="1199.0" y="764" font-size="14" fill="#1d1d1d" stroke="#1d1d1d" stroke-width="0.5" textLength="50.7" lengthAdjust="spacingAndGlyphs">Tilegnet</text><rect x="1329.5" y="754" width="13" height="1.8" fill="#333"/><rect x="1331.8" y="758" width="8.5" height="1.8" fill="#333"/><rect x="1333.8" y="762" width="4.5" height="1.8" fill="#333"/><circle cx="1358.0" cy="754.5" r="1.3" fill="#333"/><circle cx="1358.0" cy="759" r="1.3" fill="#333"/><circle cx="1358.0" cy="763.5" r="1.3" fill="#333"/><rect x="1376.5" y="752" width="2" height="13" fill="#dcdcdc"/><text x="1392.0" y="764" font-size="14" fill="#1d1d1d" stroke="#1d1d1d" stroke-width="0.5" textLength="170.8" lengthAdjust="spacingAndGlyphs">Ventet på svar siden (Dato)</text><rect x="1584.5" y="754" width="13" height="1.8" fill="#333"/><rect x="1586.8" y="758" width="8.5" height="1.8" fill="#333"/><rect x="1588.8" y="762" width="4.5" height="1.8" fill="#333"/><circle cx="1613.0" cy="754.5" r="1.3" fill="#333"/><circle cx="1613.0" cy="759" r="1.3" fill="#333"/><circle cx="1613.0" cy="763.5" r="1.3" fill="#333"/><rect x="1631.5" y="752" width="2" height="13" fill="#dcdcdc"/><text x="1647.0" y="764" font-size="14" fill="#1d1d1d" stroke="#1d1d1d" stroke-width="0.5" textLength="165.9" lengthAdjust="spacingAndGlyphs">Ventet på svar siden (UTC)</text><rect x="1834.5" y="754" width="13" height="1.8" fill="#333"/><rect x="1836.8" y="758" width="8.5" height="1.8" fill="#333"/><rect x="1838.8" y="762" width="4.5" height="1.8" fill="#333"/><circle cx="1863.0" cy="754.5" r="1.3" fill="#333"/><circle cx="1863.0" cy="759" r="1.3" fill="#333"/><circle cx="1863.0" cy="763.5" r="1.3" fill="#333"/><rect x="1881.5" y="752" width="2" height="13" fill="#dcdcdc"/><text x="1897.0" y="764" font-size="14" fill="#1d1d1d" stroke="#1d1d1d" stroke-width="0.5" textLength="184.1" lengthAdjust="spacingAndGlyphs">Ventet på svar siden (Måned)</text><rect x="2103.5" y="754" width="13" height="1.8" fill="#333"/><rect x="2105.8" y="758" width="8.5" height="1.8" fill="#333"/><rect x="2107.8" y="762" width="4.5" height="1.8" fill="#333"/><circle cx="2132.0" cy="754.5" r="1.3" fill="#333"/><circle cx="2132.0" cy="759" r="1.3" fill="#333"/><circle cx="2132.0" cy="763.5" r="1.3" fill="#333"/><rect x="2150.5" y="752" width="2" height="13" fill="#dcdcdc"/><text x="2166.0" y="764" font-size="14" fill="#1d1d1d" stroke="#1d1d1d" stroke-width="0.5" textLength="183.7" lengthAdjust="spacingAndGlyphs">Ventet på svar siden (kvartal)</text><rect x="2371.5" y="754" width="13" height="1.8" fill="#333"/><rect x="2373.8" y="758" width="8.5" height="1.8" fill="#333"/><rect x="2375.8" y="762" width="4.5" height="1.8" fill="#333"/><circle cx="2400.0" cy="754.5" r="1.3" fill="#333"/><circle cx="2400.0" cy="759" r="1.3" fill="#333"/><circle cx="2400.0" cy="763.5" r="1.3" fill="#333"/><rect x="2418.5" y="752" width="2" height="13" fill="#dcdcdc"/><text x="2434" y="764" font-size="13.2" font-weight="bold" fill="#1d1d1d">Op</text></g><g clip-path="url(#bclip)"><g fill="none" stroke="#c0001c" stroke-width="1.8"><path d="M25.8 793.9 H21 Q19.9 793.9 19.9 795.0 V804.8 Q19.9 805.9 21 805.9 H31 Q32 805.9 32 804.8 V800.0"/><path d="M23.4 802.5 L31.2 794.5 M27.3 793.9 H32 V798.6"/></g><text x="43" y="804.6" font-size="12.5" fill="#c0001c">CALL348350</text><text x="169" y="804.0" font-size="14.2" fill="#1d1d1d">Medium</text><text x="305" y="804.0" font-size="13.7" fill="#1d1d1d">Varslingspliktig hendelse - Varsling av ansvarlige</text><text x="655" y="804.0" font-size="14" fill="#1d1d1d" clip-path="url(#dclip)">Nettbanken har en feil slik at penger er kommet på avveie</text><circle cx="1010" cy="799.0" r="4.4" fill="#f2f2f2" stroke="#444" stroke-width="1.3"/><text x="1017.6" y="804.0" font-size="13.7" fill="#c0001c" textLength="106.8" lengthAdjust="spacingAndGlyphs">Ragnar Stølsmark</text><text x="1392" y="804.0" font-size="13.3" fill="#1d1d1d">21.1.2026</text><text x="1647" y="804.0" font-size="13.4" fill="#1d1d1d">2026-01-21T12:56:17.657Z</text><text x="1897" y="804.0" font-size="13.4" fill="#1d1d1d">jan. 2026</text><text x="2166" y="804.0" font-size="13.4" fill="#1d1d1d">Q1 2026</text><text x="2434" y="804.0" font-size="13.4" fill="#1d1d1d">2</text><g fill="none" stroke="#c0001c" stroke-width="1.8"><path d="M25.8 830.9 H21 Q19.9 830.9 19.9 832.0 V841.8 Q19.9 842.9 21 842.9 H31 Q32 842.9 32 841.8 V837.0"/><path d="M23.4 839.5 L31.2 831.5 M27.3 830.9 H32 V835.6"/></g><text x="43" y="841.6" font-size="12.5" fill="#c0001c">CALL348255</text><text x="169" y="841.0" font-size="14.2" fill="#1d1d1d">Medium</text><text x="305" y="841.0" font-size="13.7" fill="#1d1d1d" textLength="117.2" lengthAdjust="spacingAndGlyphs">Konsekvensanalyse</text><text x="655" y="841.0" font-size="14" fill="#1d1d1d" clip-path="url(#dclip)">Kritisk nedetid i nettbankløsningen gjør at kunder ikke får</text><circle cx="1010" cy="836.0" r="4.4" fill="#f2f2f2" stroke="#444" stroke-width="1.3"/><text x="1017.6" y="841.0" font-size="13.7" fill="#c0001c" textLength="89.4" lengthAdjust="spacingAndGlyphs">Håvard Meling</text><text x="1392" y="841.0" font-size="13.3" fill="#1d1d1d">25.11.2025</text><text x="1647" y="841.0" font-size="13.4" fill="#1d1d1d">2025-11-25T12:04:37.923Z</text><text x="1897" y="841.0" font-size="13.4" fill="#1d1d1d">nov. 2025</text><text x="2166" y="841.0" font-size="13.4" fill="#1d1d1d">Q4 2025</text><text x="2434" y="841.0" font-size="13.4" fill="#1d1d1d">2</text><g fill="none" stroke="#c0001c" stroke-width="1.8"><path d="M25.8 867.9 H21 Q19.9 867.9 19.9 869.0 V878.8 Q19.9 879.9 21 879.9 H31 Q32 879.9 32 878.8 V874.0"/><path d="M23.4 876.5 L31.2 868.5 M27.3 867.9 H32 V872.6"/></g><text x="43" y="878.6" font-size="12.5" fill="#c0001c">CALL348254</text><text x="169" y="878.0" font-size="14.2" fill="#1d1d1d">Medium</text><text x="305" y="878.0" font-size="13.7" fill="#1d1d1d" textLength="117.2" lengthAdjust="spacingAndGlyphs">Konsekvensanalyse</text><text x="655" y="878.0" font-size="14" fill="#1d1d1d" clip-path="url(#dclip)">En systemfeil fører til forsinkede eller dupliserte betalinger</text><circle cx="1010" cy="873.0" r="4.4" fill="#f2f2f2" stroke="#444" stroke-width="1.3"/><text x="1017.6" y="878.0" font-size="13.7" fill="#c0001c" textLength="89.4" lengthAdjust="spacingAndGlyphs">Håvard Meling</text><text x="1392" y="878.0" font-size="13.3" fill="#1d1d1d">25.11.2025</text><text x="1647" y="878.0" font-size="13.4" fill="#1d1d1d">2025-11-25T11:00:43.440Z</text><text x="1897" y="878.0" font-size="13.4" fill="#1d1d1d">nov. 2025</text><text x="2166" y="878.0" font-size="13.4" fill="#1d1d1d">Q4 2025</text><text x="2434" y="878.0" font-size="13.4" fill="#1d1d1d">2</text><g fill="none" stroke="#c0001c" stroke-width="1.8"><path d="M25.8 904.9 H21 Q19.9 904.9 19.9 906.0 V915.8 Q19.9 916.9 21 916.9 H31 Q32 916.9 32 915.8 V911.0"/><path d="M23.4 913.5 L31.2 905.5 M27.3 904.9 H32 V909.6"/></g><text x="43" y="915.6" font-size="12.5" fill="#c0001c">CALL348191</text><text x="169" y="915.0" font-size="14.2" fill="#1d1d1d">Høy</text><text x="305" y="915.0" font-size="13.7" fill="#1d1d1d" textLength="117.2" lengthAdjust="spacingAndGlyphs">Konsekvensanalyse</text><text x="655" y="915.0" font-size="14" fill="#1d1d1d" clip-path="url(#dclip)">En ansatt eller ekstern aktør får urettmessig tilgang til systemer</text><circle cx="1010" cy="910.0" r="4.4" fill="#f2f2f2" stroke="#444" stroke-width="1.3"/><text x="1017.6" y="915.0" font-size="13.7" fill="#c0001c" textLength="89.4" lengthAdjust="spacingAndGlyphs">Håvard Meling</text><text x="1392" y="915.0" font-size="13.3" fill="#1d1d1d">17.11.2025</text><text x="1647" y="915.0" font-size="13.4" fill="#1d1d1d">2025-11-17T13:47:05.650Z</text><text x="1897" y="915.0" font-size="13.4" fill="#1d1d1d">nov. 2025</text><text x="2166" y="915.0" font-size="13.4" fill="#1d1d1d">Q4 2025</text><text x="2434" y="915.0" font-size="13.4" fill="#1d1d1d">1</text><g fill="none" stroke="#c0001c" stroke-width="1.8"><path d="M25.8 941.9 H21 Q19.9 941.9 19.9 943.0 V952.8 Q19.9 953.9 21 953.9 H31 Q32 953.9 32 952.8 V948.0"/><path d="M23.4 950.5 L31.2 942.5 M27.3 941.9 H32 V946.6"/></g><text x="43" y="952.6" font-size="12.5" fill="#c0001c">CALL348190</text><text x="169" y="952.0" font-size="14.2" fill="#1d1d1d">Medium</text><text x="305" y="952.0" font-size="13.7" fill="#1d1d1d">Varslingspliktig hendelse - Varsling av ansvarlige</text><text x="655" y="952.0" font-size="14" fill="#1d1d1d" clip-path="url(#dclip)">Kunder mottar falske e-poster eller SMS-er som utgir seg</text><circle cx="1010" cy="947.0" r="4.4" fill="#f2f2f2" stroke="#444" stroke-width="1.3"/><text x="1017.6" y="952.0" font-size="13.7" fill="#c0001c" textLength="89.4" lengthAdjust="spacingAndGlyphs">Håvard Meling</text><text x="1392" y="952.0" font-size="13.3" fill="#1d1d1d">17.11.2025</text><text x="1647" y="952.0" font-size="13.4" fill="#1d1d1d">2025-11-17T13:31:02.953Z</text><text x="1897" y="952.0" font-size="13.4" fill="#1d1d1d">nov. 2025</text><text x="2166" y="952.0" font-size="13.4" fill="#1d1d1d">Q4 2025</text><text x="2434" y="952.0" font-size="13.4" fill="#1d1d1d">1</text><g fill="none" stroke="#c0001c" stroke-width="1.8"><path d="M25.8 978.9 H21 Q19.9 978.9 19.9 980.0 V989.8 Q19.9 990.9 21 990.9 H31 Q32 990.9 32 989.8 V985.0"/><path d="M23.4 987.5 L31.2 979.5 M27.3 978.9 H32 V983.6"/></g><text x="43" y="989.6" font-size="12.5" fill="#c0001c">CALL348031</text><text x="169" y="989.0" font-size="14.2" fill="#1d1d1d">Medium</text><text x="305" y="989.0" font-size="13.7" fill="#1d1d1d" textLength="96.6" lengthAdjust="spacingAndGlyphs">Saksbehandling</text><text x="655" y="989.0" font-size="14" fill="#1d1d1d" clip-path="url(#dclip)">Teknisk feil gir feil beslutningsgrunnlag og kan føre til feil</text><circle cx="1010" cy="984.0" r="4.4" fill="#f2f2f2" stroke="#444" stroke-width="1.3"/><text x="1017.6" y="989.0" font-size="13.7" fill="#c0001c" textLength="89.4" lengthAdjust="spacingAndGlyphs">Håvard Meling</text><text x="1392" y="989.0" font-size="13.3" fill="#1d1d1d">11.11.2025</text><text x="1647" y="989.0" font-size="13.4" fill="#1d1d1d">2025-11-11T15:08:26.950Z</text><text x="1897" y="989.0" font-size="13.4" fill="#1d1d1d">nov. 2025</text><text x="2166" y="989.0" font-size="13.4" fill="#1d1d1d">Q4 2025</text><text x="2434" y="989.0" font-size="13.4" fill="#1d1d1d">1</text><g fill="none" stroke="#c0001c" stroke-width="1.8"><path d="M25.8 1015.9 H21 Q19.9 1015.9 19.9 1017.0 V1026.8 Q19.9 1027.9 21 1027.9 H31 Q32 1027.9 32 1026.8 V1022.0"/><path d="M23.4 1024.5 L31.2 1016.5 M27.3 1015.9 H32 V1020.6"/></g><text x="43" y="1026.6" font-size="12.5" fill="#c0001c">CALL348030</text><text x="169" y="1026.0" font-size="14.2" fill="#1d1d1d">Medium</text><text x="305" y="1026.0" font-size="13.7" fill="#1d1d1d" textLength="117.2" lengthAdjust="spacingAndGlyphs">Konsekvensanalyse</text><text x="655" y="1026.0" font-size="14" fill="#1d1d1d" clip-path="url(#dclip)">Ansatte beholder systemtilganger etter bytte av rolle eller</text><rect x="1005" y="1012.2" width="20" height="15.3" rx="2" fill="#bf0a1e"/><circle cx="1011.6" cy="1017.4" r="2.5" fill="#fff"/><path d="M1006.4 1025.2 Q1006.8 1021.4 1011.8 1021.4 Q1016.8 1021.4 1017.2 1025.2 Z" fill="#fff"/><rect x="1016.7" y="1015.2" width="6.6" height="4.6" fill="#fff"/><path d="M1017.6 1016.0 L1020 1017.8 L1022.4 1016.0" fill="none" stroke="#bf0a1e" stroke-width="0.9"/><text x="1029.9" y="1026.0" font-size="13.7" fill="#c0001c" textLength="123.6" lengthAdjust="spacingAndGlyphs">Edvardsen, Christian</text><text x="1392" y="1026.0" font-size="13.3" fill="#1d1d1d">7.11.2025</text><text x="1647" y="1026.0" font-size="13.4" fill="#1d1d1d">2025-11-07T11:23:51.047Z</text><text x="1897" y="1026.0" font-size="13.4" fill="#1d1d1d">nov. 2025</text><text x="2166" y="1026.0" font-size="13.4" fill="#1d1d1d">Q4 2025</text><text x="2434" y="1026.0" font-size="13.4" fill="#1d1d1d">1</text><g fill="none" stroke="#c0001c" stroke-width="1.8"><path d="M25.8 1052.9 H21 Q19.9 1052.9 19.9 1054.0 V1063.8 Q19.9 1064.9 21 1064.9 H31 Q32 1064.9 32 1063.8 V1059.0"/><path d="M23.4 1061.5 L31.2 1053.5 M27.3 1052.9 H32 V1057.6"/></g><text x="43" y="1063.6" font-size="12.5" fill="#c0001c">CALL348029</text><text x="169" y="1063.0" font-size="14.2" fill="#1d1d1d">Medium</text><text x="305" y="1063.0" font-size="13.7" fill="#1d1d1d" textLength="117.2" lengthAdjust="spacingAndGlyphs">Konsekvensanalyse</text><text x="655" y="1063.0" font-size="14" fill="#1d1d1d" clip-path="url(#dclip)">Telefon- og chatsystem er nede over lengre tid, slik at kunder</text><rect x="1005" y="1049.2" width="20" height="15.3" rx="2" fill="#bf0a1e"/><circle cx="1011.6" cy="1054.4" r="2.5" fill="#fff"/><path d="M1006.4 1062.2 Q1006.8 1058.4 1011.8 1058.4 Q1016.8 1058.4 1017.2 1062.2 Z" fill="#fff"/><rect x="1016.7" y="1052.2" width="6.6" height="4.6" fill="#fff"/><path d="M1017.6 1053.0 L1020 1054.8 L1022.4 1053.0" fill="none" stroke="#bf0a1e" stroke-width="0.9"/><text x="1029.9" y="1063.0" font-size="13.7" fill="#c0001c" textLength="123.6" lengthAdjust="spacingAndGlyphs">Edvardsen, Christian</text><text x="1392" y="1063.0" font-size="13.3" fill="#1d1d1d">6.11.2025</text><text x="1647" y="1063.0" font-size="13.4" fill="#1d1d1d">2025-11-06T14:41:47.090Z</text><text x="1897" y="1063.0" font-size="13.4" fill="#1d1d1d">nov. 2025</text><text x="2166" y="1063.0" font-size="13.4" fill="#1d1d1d">Q4 2025</text><text x="2434" y="1063.0" font-size="13.4" fill="#1d1d1d">6</text><g fill="none" stroke="#c0001c" stroke-width="1.8"><path d="M25.8 1089.9 H21 Q19.9 1089.9 19.9 1091.0 V1100.8 Q19.9 1101.9 21 1101.9 H31 Q32 1101.9 32 1100.8 V1096.0"/><path d="M23.4 1098.5 L31.2 1090.5 M27.3 1089.9 H32 V1094.6"/></g><text x="43" y="1100.6" font-size="12.5" fill="#c0001c">CALL348028</text><text x="169" y="1100.0" font-size="14.2" fill="#1d1d1d">Medium</text><text x="305" y="1100.0" font-size="13.7" fill="#1d1d1d" textLength="117.2" lengthAdjust="spacingAndGlyphs">Konsekvensanalyse</text><text x="655" y="1100.0" font-size="14" fill="#1d1d1d" clip-path="url(#dclip)">Manglende oppfølging av ergonomi eller sikkerhet fører til</text><circle cx="1010" cy="1095.0" r="4.4" fill="#f2f2f2" stroke="#444" stroke-width="1.3"/><text x="1017.6" y="1100.0" font-size="13.7" fill="#c0001c" textLength="89.4" lengthAdjust="spacingAndGlyphs">Håvard Meling</text><text x="1392" y="1100.0" font-size="13.3" fill="#1d1d1d">6.11.2025</text><text x="1647" y="1100.0" font-size="13.4" fill="#1d1d1d">2025-11-06T14:36:23.557Z</text><text x="1897" y="1100.0" font-size="13.4" fill="#1d1d1d">nov. 2025</text><text x="2166" y="1100.0" font-size="13.4" fill="#1d1d1d">Q4 2025</text><text x="2434" y="1100.0" font-size="13.4" fill="#1d1d1d">6</text></g><rect x="2436" y="781" width="15" height="322" fill="#fafafa"/><rect x="2436" y="1103" width="15" height="15" fill="#fff"/><rect x="2439" y="799" width="9" height="64" rx="4.5" fill="#8a8a8a"/><path d="M2439 792.6 L2448 792.6 L2443.5 785.7 Z" fill="#8a8a8a"/><path d="M2439 1091.8 L2448 1091.8 L2443.5 1098.8 Z" fill="#8a8a8a"/><rect x="24" y="1106" width="250" height="8.6" rx="4.3" fill="#8a8a8a"/><path d="M17.8 1106.6 L17.8 1115 L10.4 1110.8 Z" fill="#8a8a8a"/><path d="M2424.3 1105.8 L2424.3 1115 L2431.6 1110.4 Z" fill="#8a8a8a"/><g fill="none" stroke="#333" stroke-width="1.4"><rect x="2462" y="758.8" width="12" height="12" rx="2"/><line x1="2462" y1="763" x2="2474" y2="763"/><line x1="2466.5" y1="763" x2="2466.5" y2="770.8"/></g><text transform="translate(2463.5,780) rotate(90)" font-size="13.5" fill="#1d1d1d" textLength="54.7" lengthAdjust="spacingAndGlyphs">Kolonner</text><rect x="2462" y="877" width="12" height="1.8" fill="#333"/><rect x="2464" y="881.2" width="8" height="1.8" fill="#333"/><rect x="2466.5" y="885.4" width="3" height="1.8" fill="#333"/><text transform="translate(2463.5,897.5) rotate(90)" font-size="13.5" fill="#1d1d1d" textLength="29.7" lengthAdjust="spacingAndGlyphs">Filtre</text><text x="38.6" y="1144.2" font-size="13.2" font-weight="bold" fill="#1d1d1d" textLength="58.8" lengthAdjust="spacingAndGlyphs">Rader: 39</text></svg>
</body></html>
